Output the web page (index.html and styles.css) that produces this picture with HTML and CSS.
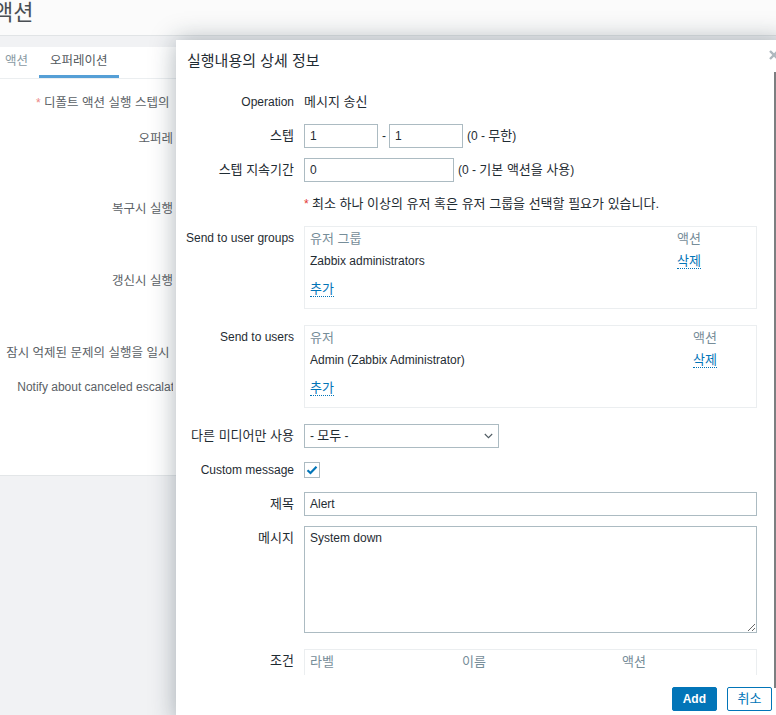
FILE: index.html
```html
<!DOCTYPE html>
<html lang="ko">
<head>
<meta charset="utf-8">
<title>액션</title>
<link rel="stylesheet" href="styles.css">
</head>
<body>
<div class="page">
  <div class="page-head"><h1 class="page-title">액션</h1></div>
  <div class="panel">
    <div class="tabs">
      <div class="tab">액션</div>
      <div class="tab active">오퍼레이션</div>
    </div>
    <div class="lform">
      <div class="lrow r1"><div class="llabel"><span class="ast">*</span> <span class="lko">디폴트 액션 실행 스텝의 기간</span></div></div>
      <div class="lrow r2"><div class="llabel lko">오퍼레이션</div></div>
      <div class="lrow r3"><div class="llabel lko">복구시 실행내용</div></div>
      <div class="lrow r4"><div class="llabel lko">갱신시 실행내용</div></div>
      <div class="lrow r5"><div class="llabel lko">잠시 억제된 문제의 실행을 일시 정지</div></div>
      <div class="lrow r6"><div class="llabel">Notify about canceled escalations</div></div>
    </div>
  </div>
</div>

<div class="modal">
  <div class="modal-head">
    <h4 class="modal-title">실행내용의 상세 정보</h4>
  </div>
  <button class="close" aria-label="close">
    <svg width="10" height="10" viewBox="0 0 10 10"><path d="M1 1L9 9M9 1L1 9" stroke="#aeb8be" stroke-width="2.4" fill="none"/></svg>
  </button>
  <div class="scroll-thumb"></div>
  <div class="modal-body">
    <div class="row">
      <div class="lbl">Operation</div>
      <div class="ctl text ko">메시지 송신</div>
    </div>
    <div class="row">
      <div class="lbl ko">스텝</div>
      <div class="ctl inline">
        <div class="input w74">1</div>
        <span class="dash">-</span>
        <div class="input w74">1</div>
        <span class="hint">(0 - <span class="ko">무한</span>)</span>
      </div>
    </div>
    <div class="row">
      <div class="lbl ko">스텝 지속기간</div>
      <div class="ctl inline">
        <div class="input w150">0</div>
        <span class="hint">(0 - <span class="ko">기본 액션을 사용</span>)</span>
      </div>
    </div>
    <div class="row">
      <div class="lbl"></div>
      <div class="ctl text"><span class="red">*</span> <span class="ko">최소 하나 이상의 유저 혹은 유저 그룹을 선택할 필요가 있습니다.</span></div>
    </div>
    <div class="row big">
      <div class="lbl">Send to user groups</div>
      <div class="ctl">
        <div class="box groups">
          <div class="brow bhead ko"><span>유저 그룹</span><span>액션</span></div>
          <div class="brow bdata"><span>Zabbix administrators</span><span><a class="link ko">삭제</a></span></div>
          <div class="brow badd"><span><a class="link ko">추가</a></span></div>
        </div>
      </div>
    </div>
    <div class="row big">
      <div class="lbl">Send to users</div>
      <div class="ctl">
        <div class="box users">
          <div class="brow bhead ko"><span>유저</span><span>액션</span></div>
          <div class="brow bdata"><span>Admin (Zabbix Administrator)</span><span><a class="link ko">삭제</a></span></div>
          <div class="brow badd"><span><a class="link ko">추가</a></span></div>
        </div>
      </div>
    </div>
    <div class="row">
      <div class="lbl ko">다른 미디어만 사용</div>
      <div class="ctl">
        <div class="select">
          <span>- <span class="ko">모두</span> -</span>
          <svg width="9" height="6" viewBox="0 0 9 6"><path d="M0.8 1L4.5 4.7L8.2 1" stroke="#4f5b62" stroke-width="1.1" fill="none"/></svg>
        </div>
      </div>
    </div>
    <div class="row">
      <div class="lbl">Custom message</div>
      <div class="ctl">
        <div class="checkbox">
          <svg width="12" height="10" viewBox="0 0 12 10"><path d="M1.5 5.2L4.5 8L10.5 1.8" stroke="#0275b8" stroke-width="2.2" fill="none"/></svg>
        </div>
      </div>
    </div>
    <div class="row">
      <div class="lbl ko">제목</div>
      <div class="ctl"><div class="input full">Alert</div></div>
    </div>
    <div class="row big">
      <div class="lbl ko">메시지</div>
      <div class="ctl"><textarea class="textarea" readonly>System down</textarea></div>
    </div>
    <div class="row">
      <div class="lbl ko">조건</div>
      <div class="ctl">
        <div class="box cond">
          <div class="brow bhead ko"><span>라벨</span><span>이름</span><span>액션</span></div>
        </div>
      </div>
    </div>
  </div>
  <div class="modal-foot">
    <button class="btn primary">Add</button>
    <button class="btn secondary ko">취소</button>
  </div>
</div>
</body>
</html>
```

FILE: styles.css
```css
* { box-sizing: border-box; }

html, body {
  margin: 0;
  padding: 0;
}

body {
  width: 776px;
  height: 715px;
  overflow: hidden;
  position: relative;
  background: #f1f2f4;
  font-family: "Liberation Sans", "Noto Sans CJK KR", sans-serif;
  font-size: 12px;
  line-height: 14px;
  color: #1f2c33;
}

/* Hangul runs: slightly larger so they match the reference glyph widths */
.ko { font-size: 13px; }
.lko { font-size: 12.5px; }

/* background page */
.page-head {
  height: 36px;
  background: #fbfbfb;
  border-bottom: 1px solid #e1e4e6;
}

.page-title {
  margin: 0 0 0 -7px;
  font-size: 22px;
  line-height: 26px;
  font-weight: normal;
  color: #4a4f53;
}

.panel {
  margin-top: 11px;
  height: 429px;
  background: #fff;
  border-bottom: 1px solid #e3e6e8;
}

.tabs {
  display: flex;
  margin-left: -6px;
  border-bottom: 1px solid #ebeef0;
}

.tab {
  padding: 7px 11px 7px;
  font-size: 12.5px;
  line-height: 14px;
  color: #8a9aa3;
  border-bottom: 3px solid transparent;
}

.tab.active {
  color: #555b5f;
  border-bottom-color: #559fd6;
}

.lform {
  width: 173px;
  overflow: hidden;
  padding-top: 12px;
  display: flex;
  flex-direction: column;
  gap: 10px;
}

.lrow { display: flex; }
.r1 { height: 26px; }
.r2 { height: 60px; }
.r3 { height: 62px; }
.r4 { height: 62px; }
.r5 { height: 24px; }
.r6 { height: 24px; }

.llabel {
  width: 196px;
  flex: none;
  text-align: right;
  white-space: nowrap;
  line-height: 24px;
  color: #5b6166;
}

.ast { color: #ec8785; }

/* modal */
.modal {
  position: absolute;
  left: 176px;
  top: 40px;
  width: 610px;
  height: 683px;
  background: #fff;
  box-shadow: 0 0 24px rgba(20, 40, 55, 0.35);
  display: flex;
  flex-direction: column;
}

.modal-head {
  height: 42px;
  flex: none;
  padding-left: 11px;
}

.modal-title {
  margin: 0;
  font-size: 15px;
  line-height: 42px;
  font-weight: normal;
  color: #1f2c33;
}

.close {
  position: absolute;
  left: 592px;
  top: 7px;
  width: 12px;
  height: 12px;
  padding: 1px;
  border: 0;
  background: none;
}

.scroll-thumb {
  position: absolute;
  left: 598px;
  top: 32px;
  width: 2px;
  height: 616px;
  background: #7c7f81;
}

.modal-body {
  flex: 1;
  overflow: hidden;
  padding: 8px 29px 0 10px;
}

.row {
  display: flex;
  margin-bottom: 10px;
}
.row.big { margin-bottom: 16px; }

.lbl {
  width: 108px;
  flex: none;
  margin-right: 10px;
  text-align: right;
  line-height: 24px;
  white-space: nowrap;
  color: #1f2c33;
}

.ctl {
  width: 453px;
  flex: none;
}

.ctl.text { line-height: 24px; white-space: nowrap; }

.ctl.inline {
  display: flex;
  align-items: center;
}

.input {
  height: 24px;
  border: 1px solid #acbbc2;
  padding: 0 5px;
  line-height: 22px;
  background: #fff;
}
.w74 { width: 74px; }
.w150 { width: 150px; }
.full { width: 453px; }

.dash { margin: 0 3px 0 4px; }
.hint { margin-left: 4px; white-space: nowrap; }

.red { color: #e33734; }

.box {
  border: 1px solid #ebeef0;
  padding: 3px 5px 4px;
}

.brow {
  display: grid;
  align-items: center;
}
.groups .brow { grid-template-columns: 367px auto; }
.users .brow { grid-template-columns: 383px auto; }
.cond .brow { grid-template-columns: 152px 160px auto; }
.box.cond { height: 60px; }

.bhead {
  height: 18px;
  color: #768d99;
}
.bdata { height: 26px; }
.badd { height: 30px; }

.link {
  display: inline-block;
  line-height: 14px;
  color: #0275b8;
  border-bottom: 1px dotted #0275b8;
  cursor: pointer;
}

.select {
  width: 195px;
  height: 24px;
  border: 1px solid #acbbc2;
  padding: 0 5px 0 5px;
  display: flex;
  align-items: center;
  justify-content: space-between;
}

.checkbox {
  width: 16px;
  height: 16px;
  margin-top: 4px;
  border: 1px solid #acbbc2;
  display: flex;
  align-items: center;
  justify-content: center;
}

.textarea {
  display: block;
  width: 453px;
  height: 107px;
  border: 1px solid #acbbc2;
  padding: 4px 5px;
  margin: 0;
  font-family: inherit;
  font-size: 12px;
  line-height: 14px;
  color: #1f2c33;
  resize: both;
  outline: none;
}

.modal-foot {
  height: 48px;
  flex: none;
  display: flex;
  justify-content: flex-end;
  align-items: flex-start;
  gap: 10px;
  padding: 12px 14px 0 0;
  background: #fff;
}

.btn {
  height: 24px;
  min-width: 45px;
  padding: 0 9px;
  font-family: inherit;
  font-size: 12px;
  line-height: 22px;
  border: 1px solid #0275b8;
  border-radius: 2px;
}

.btn.ko { font-size: 13px; }

.btn.primary {
  background: #0275b8;
  color: #fff;
  font-weight: bold;
  padding: 0 10px;
}

.btn.secondary {
  background: #fff;
  color: #0275b8;
}
```
